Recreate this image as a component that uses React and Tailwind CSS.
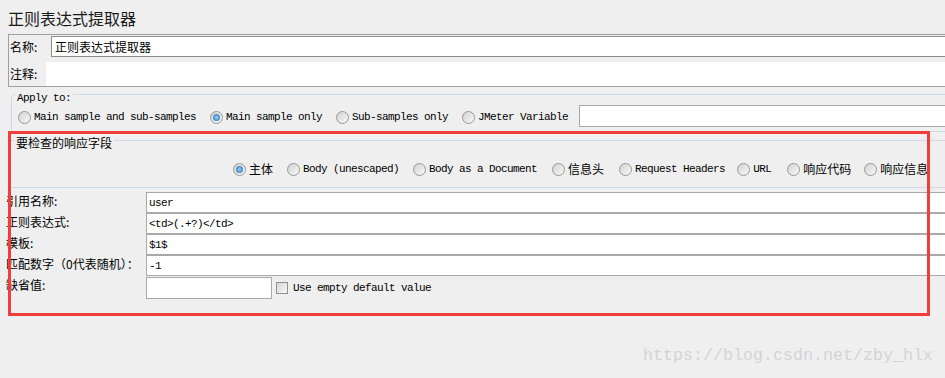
import React from 'react'

// Texte "anglais" de l'écran Swing : une police à chasse fixe de 6 px par caractère.
const MONO = "font-['Liberation_Mono','Noto_Sans_CJK_SC',monospace] text-[11px] tracking-[-0.6px]"

const APPLY = [
  { label: 'Main sample and sub-samples' },
  { label: 'Main sample only', on: true },
  { label: 'Sub-samples only' },
  { label: 'JMeter Variable' },
]

// Les écarts ne sont pas réguliers dans la capture : on les garde tels quels.
const FIELDS = [
  { label: '主体', on: true, ml: 'ml-0', cjk: true },
  { label: 'Body (unescaped)', ml: 'ml-[14px]' },
  { label: 'Body as a Document', ml: 'ml-[14px]' },
  { label: '信息头', ml: 'ml-[15px]', cjk: true },
  { label: 'Request Headers', ml: 'ml-[15px]' },
  { label: 'URL', ml: 'ml-[12px]' },
  { label: '响应代码', ml: 'ml-[16px]', cjk: true },
  { label: '响应信息', ml: 'ml-[13px]', cjk: true },
]

const ROWS = [
  { label: '引用名称:', value: 'user' },
  { label: '正则表达式:', value: '<td>(.+?)</td>' },
  { label: '模板:', value: '$1$' },
  { label: '匹配数字（0代表随机）：', value: '-1' },
]

function Radio({ on }) {
  return (
    <span className="flex h-[13px] w-[13px] shrink-0 items-center justify-center rounded-full border border-[#979797] bg-linear-to-br from-[#d2d2d2] to-[#f9f9f9]">
      {on && <span className="h-[7px] w-[7px] rounded-full bg-radial from-[#9ad4fb] to-[#135fae]" />}
    </span>
  )
}

export default function App() {
  return (
    <div className="relative h-[378px] w-[945px] overflow-hidden bg-[#efefef] font-['Noto_Sans_CJK_SC',sans-serif] text-[12px] text-black">
      <div className="pl-[8px] pt-[8px] text-[16px] leading-[20px] text-[#1a1a1a]">正则表达式提取器</div>

      {/* nom + commentaire */}
      <div className="-mr-[20px] ml-[8px] mt-[6px] border border-[#a0a0a0] pl-[1px]">
        <div className="mt-[1px] flex h-[21px] items-center">
          <span className="w-[41px] leading-[16px]">名称:</span>
          <div className="flex h-full flex-1 items-center border border-[#8c8c8c] bg-white pl-[3px] leading-[16px]">
            正则表达式提取器
          </div>
        </div>
        <div className="mt-[5px] flex h-[24px] items-center">
          <span className="w-[36px] leading-[16px]">注释:</span>
          <div className="h-full flex-1 bg-white" />
        </div>
      </div>

      {/* Apply to */}
      <div className="-mr-[20px] ml-[11px] mt-[7px] rounded-tl-[4px] border border-[#cbd9e6] pb-[4px] pl-[6px]">
        <div className={`-ml-[3px] -mt-[3px] w-fit bg-[#efefef] px-[2px] leading-[12px] ${MONO}`}>Apply to:</div>
        <div className="mt-[1px] flex h-[22px] items-center">
          <div className="mt-[2px] flex items-center gap-[14px]">
            {APPLY.map((a) => (
              <label key={a.label} className="flex items-center gap-[3px]">
                <Radio on={a.on} />
                <span className={`leading-[12px] ${MONO}`}>{a.label}</span>
              </label>
            ))}
          </div>
          <div className="ml-[11px] h-full flex-1 border border-[#a9a9a9] bg-white" />
        </div>
      </div>

      {/* champ à examiner */}
      <div className="-mr-[20px] ml-[10px] mt-[8px] border-y border-l border-[#cbd9e6] pb-[7px]">
        <div className="-mt-[6px] ml-[3px] w-fit bg-[#efefef] px-[2px] leading-[16px]">要检查的响应字段</div>
        <div className="mt-[7px] flex h-[22px] items-center whitespace-nowrap pl-[222px]">
          {FIELDS.map((f) => (
            <label key={f.label} className={`flex shrink-0 items-center gap-[3px] ${f.ml}`}>
              <Radio on={f.on} />
              <span className={f.cjk ? 'leading-[16px]' : `leading-[12px] ${MONO}`}>{f.label}</span>
            </label>
          ))}
        </div>
      </div>

      {/* formulaire */}
      <div className="-mr-[20px] mt-[4px] pl-[6px]">
        {ROWS.map((r) => (
          <div key={r.label} className="flex h-[21px]">
            <span className="mt-[1px] w-[140px] shrink-0 self-start whitespace-nowrap leading-[16px]">{r.label}</span>
            <div className={`flex flex-1 items-center border border-[#a9a9a9] bg-white pl-[2px] leading-[12px] ${MONO}`}>
              {r.value}
            </div>
          </div>
        ))}
        <div className="mt-[1px] flex h-[22px] items-center">
          <span className="w-[140px] shrink-0 self-start leading-[16px]">缺省值:</span>
          <div className="h-full w-[126px] border border-[#a9a9a9] bg-white" />
          <span className="ml-[4px] h-[12px] w-[12px] border border-[#8e8f8f] bg-linear-to-br from-[#d8d8d8] to-[#f7f7f7]" />
          <span className={`ml-[5px] leading-[12px] ${MONO}`}>Use empty default value</span>
        </div>
      </div>

      {/* annotation rouge posée sur la capture */}
      <div className="pointer-events-none absolute left-[8px] top-[131px] h-[185px] w-[922px] border-[3px] border-[#f23d3d]" />

      <div className="pointer-events-none absolute left-[643px] top-[346px] font-['Liberation_Mono',monospace] text-[16.67px] leading-[20px] text-[#d4d4d4]">
        https://blog.csdn.net/zby_hlx
      </div>
    </div>
  )
}
